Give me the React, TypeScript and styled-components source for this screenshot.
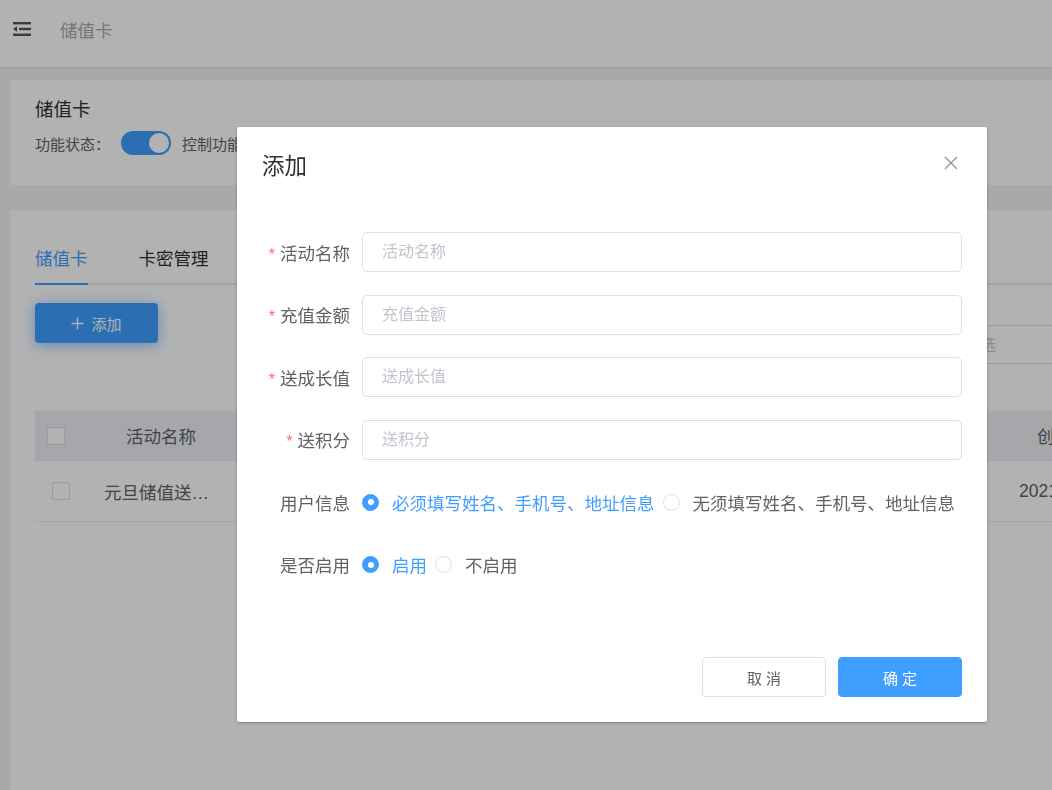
import React, { useState } from 'react';
import styled, { createGlobalStyle } from 'styled-components';

const GlobalStyle = createGlobalStyle`
  body {
    margin: 0;
    padding: 0;
    background: #f0f2f5;
    overflow: hidden;
    font-family: "Liberation Sans", "Noto Sans CJK SC", sans-serif;
  }
`;

const Page = styled.div`
  width: 100vw;
  height: 100vh;
  overflow: hidden;
`;

const Header = styled.div`
  height: 67px;
  box-sizing: border-box;
  padding: 0 0 9px 12px;
  background: #fff;
  display: flex;
  align-items: center;
  gap: 28px;
  box-shadow: 0 1px 4px rgba(0, 21, 41, 0.08);
  position: relative;
`;

const Crumb = styled.span`
  font-size: 17.5px;
  color: #a6a9ad;
`;

const Main = styled.div`
  width: 1300px;
  padding: 13px 0 0 10px;
  display: flex;
  flex-direction: column;
  gap: 25px;
`;

const InfoCard = styled.div`
  background: #fff;
  padding: 18px 25px;
  height: 105px;
  box-sizing: border-box;
`;

const ListCard = styled.div`
  background: #fff;
  padding: 25px;
  min-height: 600px;
  box-sizing: border-box;
`;

const CardTitle = styled.div`
  font-size: 18.5px;
  line-height: 24px;
  color: #303133;
`;

const StatusRow = styled.div`
  margin-top: 9px;
  display: flex;
  align-items: center;
  gap: 11px;
  font-size: 15px;
  color: #606266;
  height: 24px;
`;

const Switch = styled.span`
  width: 50px;
  height: 24px;
  border-radius: 12px;
  background: #409eff;
  position: relative;
  &::after {
    content: '';
    position: absolute;
    right: 2px;
    top: 2px;
    width: 20px;
    height: 20px;
    border-radius: 50%;
    background: #fff;
  }
`;

const Tabs = styled.div`
  display: flex;
  border-bottom: 2px solid #e4e7ed;
  width: 1240px;
`;

const Tab = styled.div<{ $active?: boolean }>`
  height: 48px;
  line-height: 48px;
  font-size: 17.5px;
  margin-right: 51px;
  color: ${(p) => (p.$active ? '#409eff' : '#303133')};
  margin-bottom: -2px;
  border-bottom: 2px solid ${(p) => (p.$active ? '#409eff' : 'transparent')};
`;

const Toolbar = styled.div`
  display: flex;
  align-items: flex-start;
  margin-top: 18px;
`;

const PrimaryBtn = styled.button`
  width: 123px;
  height: 40px;
  border: none;
  border-radius: 4px;
  background: #409eff;
  color: #fff;
  font-size: 15px;
  font-family: inherit;
  display: flex;
  align-items: center;
  justify-content: center;
  gap: 7px;
  box-shadow: 0 2px 14px rgba(64, 158, 255, 0.6);
`;

const FilterInput = styled.div`
  margin-left: 698px;
  margin-top: 22px;
  width: 300px;
  height: 39px;
  box-sizing: border-box;
  border: 1px solid #dcdfe6;
  border-radius: 4px;
  padding-left: 19px;
  font-size: 15px;
  line-height: 37px;
  color: #c0c4cc;
`;

const Table = styled.div`
  margin-top: 47px;
  width: 1200px;
`;

const TRow = styled.div<{ $head?: boolean }>`
  display: grid;
  grid-template-columns: 55px 142px 748px 200px;
  align-items: center;
  height: ${(p) => (p.$head ? '49px' : '60px')};
  background: ${(p) => (p.$head ? '#eef0f4' : '#fff')};
  border-bottom: 1px solid #ebeef5;
  font-size: 17.5px;
  color: #606266;
`;

const Cell = styled.div`
  text-align: center;
  white-space: nowrap;
  overflow: hidden;
  text-overflow: ellipsis;
  padding: 0 14px;
`;

const DateCell = styled(Cell)`
  text-align: left;
  padding-left: 39px;
`;

const HeadDateCell = styled(Cell)`
  text-align: left;
  padding-left: 57px;
`;

const CheckBox = styled.span<{ $pad: number }>`
  display: block;
  width: 16px;
  height: 16px;
  border: 1px solid #dcdfe6;
  border-radius: 2px;
  background: #fff;
  margin-left: ${(p) => p.$pad}px;
`;

const Mask = styled.div`
  position: fixed;
  inset: 0;
  background: rgba(0, 0, 0, 0.3);
  padding: 127px 0 0 237px;
`;

const Dialog = styled.div`
  width: 750px;
  background: #fff;
  border-radius: 2px;
  box-shadow: 0 1px 3px rgba(0, 0, 0, 0.3);
  position: relative;
`;

const DialogHeader = styled.div`
  padding: 25px 25px 12.5px;
  font-size: 22.5px;
  line-height: 30px;
  color: #303133;
`;

const CloseBtn = styled.span`
  position: absolute;
  top: 26px;
  right: 26px;
  width: 20px;
  height: 20px;
  display: flex;
  align-items: center;
  justify-content: center;
`;

const DialogBody = styled.div`
  padding: 37.5px 25px 60px;
  display: flex;
  flex-direction: column;
  gap: 22.5px;
`;

const FormItem = styled.div`
  display: flex;
  align-items: center;
  height: 40px;
`;

const Label = styled.label<{ $required?: boolean }>`
  width: 100px;
  box-sizing: border-box;
  padding-right: 12px;
  text-align: right;
  font-size: 17.5px;
  color: #606266;
  white-space: nowrap;
  &::before {
    content: ${(p) => (p.$required ? "'*'" : "''")};
    color: #f56c6c;
    margin-right: 5px;
    font-size: 16px;
  }
`;

const Input = styled.input`
  width: 600px;
  height: 40px;
  box-sizing: border-box;
  border: 1px solid #dcdfe6;
  border-radius: 5px;
  padding: 0 19px;
  font-size: 16px;
  font-family: inherit;
  color: #606266;
  outline: none;
  &::placeholder {
    color: #c0c4cc;
  }
`;

const RadioGroup = styled.div`
  display: flex;
  align-items: center;
  gap: 8px;
`;

const RadioItem = styled.label<{ $checked?: boolean }>`
  display: flex;
  align-items: center;
  gap: 13px;
  font-size: 17.5px;
  color: ${(p) => (p.$checked ? '#409eff' : '#606266')};
  white-space: nowrap;
  cursor: pointer;
`;

const RadioDot = styled.span<{ $checked?: boolean }>`
  width: 17px;
  height: 17px;
  box-sizing: border-box;
  border-radius: 50%;
  border: 1px solid ${(p) => (p.$checked ? '#409eff' : '#dcdfe6')};
  background: ${(p) => (p.$checked ? '#409eff' : '#fff')};
  display: flex;
  align-items: center;
  justify-content: center;
  &::after {
    content: '';
    width: 6px;
    height: 6px;
    border-radius: 50%;
    background: #fff;
    display: ${(p) => (p.$checked ? 'block' : 'none')};
  }
`;

const DialogFooter = styled.div`
  padding: 12.5px 25px 25px;
  display: flex;
  justify-content: flex-end;
  gap: 12px;
`;

const FooterBtn = styled.button<{ $primary?: boolean }>`
  width: 124px;
  height: 40px;
  border-radius: 4px;
  border: 1px solid ${(p) => (p.$primary ? '#409eff' : '#dcdfe6')};
  background: ${(p) => (p.$primary ? '#409eff' : '#fff')};
  color: ${(p) => (p.$primary ? '#fff' : '#606266')};
  font-size: 15px;
  font-family: inherit;
`;

const MenuIcon = () => (
  <svg width="20" height="16" viewBox="0 0 20 16">
    <rect x="1" y="1" width="18" height="2.4" fill="#555" />
    <rect x="7" y="6.8" width="12" height="2.4" fill="#555" />
    <path d="M1 8 L5 5.2 L5 10.8 Z" fill="#555" />
    <rect x="1" y="12.6" width="18" height="2.4" fill="#555" />
  </svg>
);

const PlusIcon = () => (
  <svg width="13" height="13" viewBox="0 0 13 13">
    <path d="M6.5 0.5 V12.5 M0.5 6.5 H12.5" stroke="#fff" strokeWidth="1.4" />
  </svg>
);

const CloseIcon = () => (
  <svg width="14" height="14" viewBox="0 0 14 14">
    <path d="M1 1 L13 13 M13 1 L1 13" stroke="#909399" strokeWidth="1.4" />
  </svg>
);

const fields = ['活动名称', '充值金额', '送成长值', '送积分'];

const App = () => {
  const [info, setInfo] = useState(0);
  const [enable, setEnable] = useState(0);

  return (
    <>
      <GlobalStyle />
      <Page>
        <Header>
          <MenuIcon />
          <Crumb>储值卡</Crumb>
        </Header>
        <Main>
          <InfoCard>
            <CardTitle>储值卡</CardTitle>
            <StatusRow>
              功能状态：
              <Switch />
              控制功能是否开启
            </StatusRow>
          </InfoCard>
          <ListCard>
            <Tabs>
              <Tab $active>储值卡</Tab>
              <Tab>卡密管理</Tab>
            </Tabs>
            <Toolbar>
              <PrimaryBtn>
                <PlusIcon />
                添加
              </PrimaryBtn>
              <FilterInput>请输入关键字筛选</FilterInput>
            </Toolbar>
            <Table>
              <TRow $head>
                <CheckBox $pad={12} />
                <Cell>活动名称</Cell>
                <Cell>充值金额</Cell>
                <HeadDateCell>创建时间</HeadDateCell>
              </TRow>
              <TRow>
                <CheckBox $pad={17} />
                <Cell>元旦储值送好礼</Cell>
                <Cell>100</Cell>
                <DateCell>2021-01-01</DateCell>
              </TRow>
            </Table>
          </ListCard>
        </Main>
        <Mask>
          <Dialog>
            <DialogHeader>添加</DialogHeader>
            <CloseBtn>
              <CloseIcon />
            </CloseBtn>
            <DialogBody>
              {fields.map((f) => (
                <FormItem key={f}>
                  <Label $required>{f}</Label>
                  <Input placeholder={f} />
                </FormItem>
              ))}
              <FormItem>
                <Label>用户信息</Label>
                <RadioGroup>
                  <RadioItem $checked={info === 0} onClick={() => setInfo(0)}>
                    <RadioDot $checked={info === 0} />
                    必须填写姓名、手机号、地址信息
                  </RadioItem>
                  <RadioItem $checked={info === 1} onClick={() => setInfo(1)}>
                    <RadioDot $checked={info === 1} />
                    无须填写姓名、手机号、地址信息
                  </RadioItem>
                </RadioGroup>
              </FormItem>
              <FormItem>
                <Label>是否启用</Label>
                <RadioGroup>
                  <RadioItem $checked={enable === 0} onClick={() => setEnable(0)}>
                    <RadioDot $checked={enable === 0} />
                    启用
                  </RadioItem>
                  <RadioItem $checked={enable === 1} onClick={() => setEnable(1)}>
                    <RadioDot $checked={enable === 1} />
                    不启用
                  </RadioItem>
                </RadioGroup>
              </FormItem>
            </DialogBody>
            <DialogFooter>
              <FooterBtn>取 消</FooterBtn>
              <FooterBtn $primary>确 定</FooterBtn>
            </DialogFooter>
          </Dialog>
        </Mask>
      </Page>
    </>
  );
};

export default App;
